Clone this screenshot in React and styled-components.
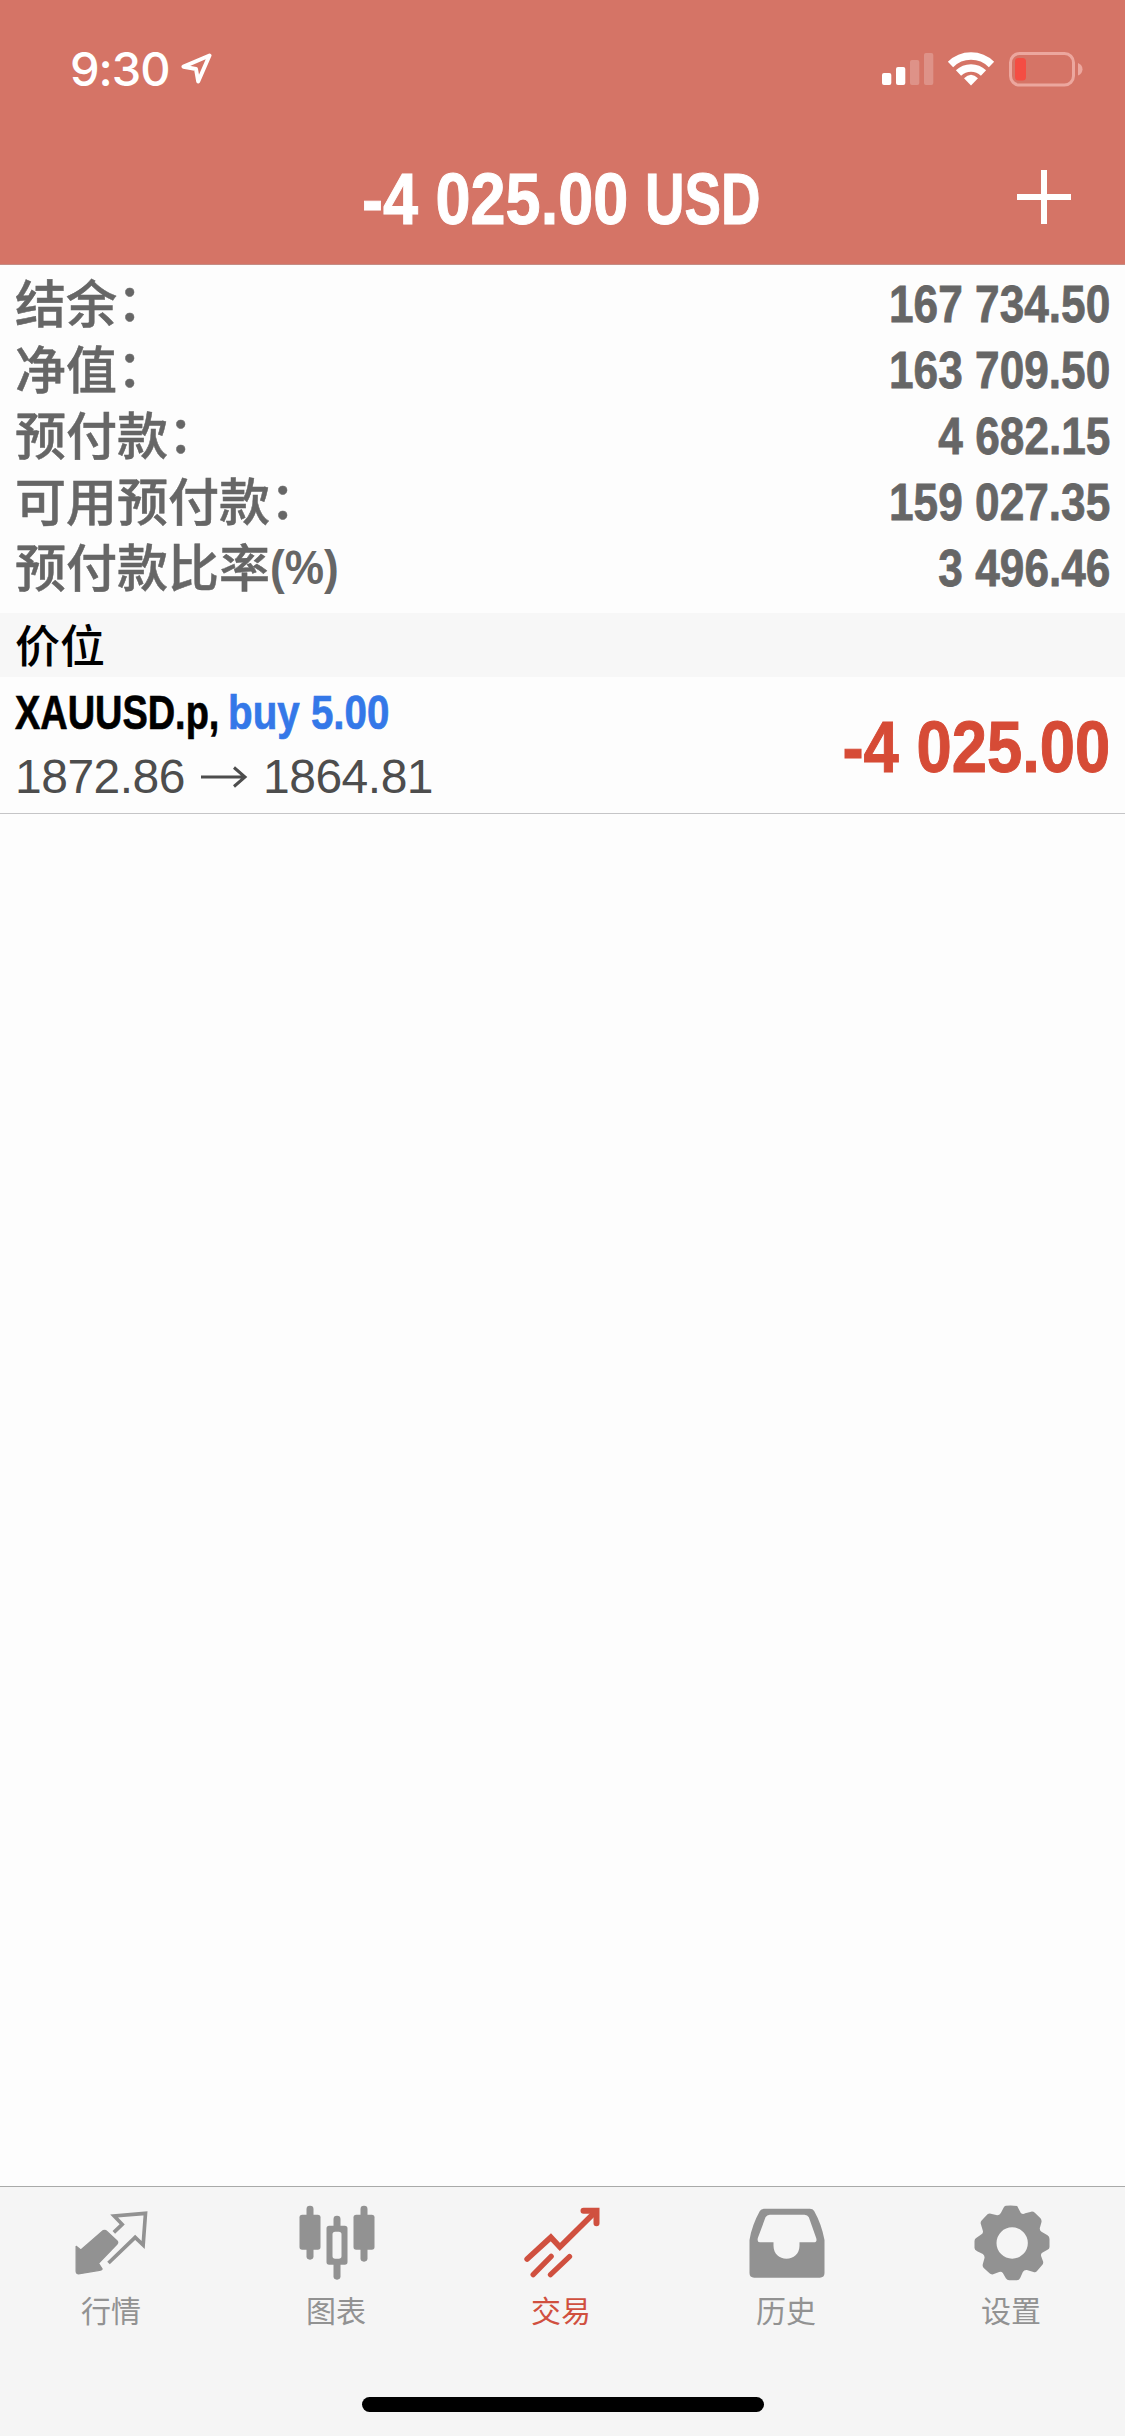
import React from 'react';
import styled, { createGlobalStyle } from 'styled-components';

const latin = '"Liberation Sans", "Noto Sans CJK SC", sans-serif';
const cjk = '"Noto Sans CJK SC", sans-serif';

const GlobalStyle = createGlobalStyle`
  * { box-sizing: border-box; }
  body { margin: 0; background: #fdfdfd; }
`;

const Screen = styled.div`
  display: flex;
  flex-direction: column;
  width: 1125px;
  height: 2436px;
  overflow: hidden;
  background: #fdfdfd;
  font-family: ${latin};
`;

const Header = styled.header`
  height: 265px;
  background: #d57466;
  color: #fff;
  border-bottom: 1px solid #c58d85;
`;

const StatusBar = styled.div`
  display: flex;
  justify-content: space-between;
  height: 132px;
  padding: 40px 40px 0 70px;
`;

const StatusLeft = styled.div`
  display: flex;
  gap: 11px;
`;

const Clock = styled.span`
  font: 500 47px/58px Inter, sans-serif;
  letter-spacing: -1px;
  width: 100px;
  white-space: nowrap;
`;

const NavBar = styled.div`
  display: grid;
  grid-template-columns: 1fr auto 1fr;
  align-items: center;
  height: 132px;
  padding: 0 54px;
`;

const AddButton = styled.button`
  grid-column: 3;
  justify-self: end;
  display: flex;
  margin: 0 0 2px;
  padding: 0;
  border: 0;
  background: none;
`;

const Title = styled.h1`
  grid-column: 2;
  display: flex;
  margin: 2px 0 0;
  font-size: 72px;
  font-weight: 700;
  line-height: 80px;
  -webkit-text-stroke: 1px currentColor;
`;

const TitlePart = styled.span`
  width: ${(p) => p.$width}px;
  white-space: nowrap;
  transform: scaleX(${(p) => p.$scale});
  transform-origin: left center;
`;

const Summary = styled.dl`
  margin: 0;
  height: 348px;
  padding: 6px 15px 0;
  color: #666;
`;

const SummaryRow = styled.div`
  display: flex;
  justify-content: space-between;
  height: 66px;
`;

const Label = styled.dt`
  display: flex;
  margin-top: -3px;
  height: 66px;
  font: 500 51px/66px ${cjk};
  -webkit-text-stroke: 0.5px currentColor;
`;

const Colon = styled.span`
  line-height: 63px;
`;

const Percent = styled.span`
  font: 700 48px/72px ${latin};
  -webkit-text-stroke: 0;
  transform: scaleX(0.92);
  transform-origin: left center;
`;

const Value = styled.dd`
  margin: 0;
  font-size: 52px;
  font-weight: 700;
  line-height: 66px;
  -webkit-text-stroke: 0.8px currentColor;
  transform: scaleX(0.85);
  transform-origin: right center;
`;

const SectionTitle = styled.h2`
  margin: 0;
  height: 64px;
  padding-left: 15px;
  background: #f7f7f7;
  color: #000;
  font: 500 45px/61px ${cjk};
`;

const Position = styled.div`
  display: flex;
  justify-content: space-between;
  align-items: center;
  height: 137px;
  padding: 0 15px;
  border-bottom: 1px solid #c5c5c7;
`;

const PositionInfo = styled.div`
  display: flex;
  flex-direction: column;
`;

const SymbolLine = styled.div`
  display: flex;
  height: 63px;
  font-size: 48px;
  font-weight: 700;
  line-height: 62px;
  -webkit-text-stroke: 0.7px currentColor;
`;

const SymbolName = styled.span`
  width: 213px;
  white-space: nowrap;
  color: #000;
  transform: scaleX(0.79);
  transform-origin: left center;
`;

const Side = styled.span`
  white-space: nowrap;
  color: #3478e8;
  transform: scaleX(0.84);
  transform-origin: left center;
`;

const PriceLine = styled.div`
  display: flex;
  align-items: center;
  gap: 14px;
  height: 64px;
  color: #4d4d4d;
  font-size: 48px;
  line-height: 62px;
  letter-spacing: -0.5px;
`;

const Profit = styled.div`
  margin-top: 3px;
  color: #d64b36;
  font-size: 72px;
  font-weight: 700;
  line-height: 80px;
  white-space: nowrap;
  -webkit-text-stroke: 1px currentColor;
  transform: scaleX(0.88);
  transform-origin: right center;
`;

const Blank = styled.main`
  flex: 1;
`;

const BottomBar = styled.footer`
  height: 250px;
  background: #f5f5f5;
  border-top: 1px solid #a9aaa9;
`;

const Tabs = styled.nav`
  display: grid;
  grid-template-columns: repeat(5, 1fr);
  height: 210px;
  padding-top: 16px;
`;

const Tab = styled.div`
  display: flex;
  flex-direction: column;
  align-items: center;
  color: ${(p) => (p.$active ? '#d0503f' : '#929292')};
`;

const TabLabel = styled.span`
  margin: 4px 3px 0 0;
  font: 400 30px/44px ${cjk};
`;

const HomeIndicator = styled.div`
  width: 402px;
  height: 15px;
  margin: 0 auto;
  border-radius: 8px;
  background: #000;
`;

const LocationIcon = () => (
  <svg width="32" height="58" viewBox="180 40 32 58" fill="none" stroke="#fff" strokeWidth="4" strokeLinejoin="round">
    <path d="M208.500 55.500 182.500 66.700 195 69 197.200 81.500Z" />
  </svg>
);

const StatusIcons = () => (
  <svg width="205" height="60" viewBox="880 40 205 60">
    <g fill="#fff">
      <rect x="882" y="73" width="9.3" height="12" rx="2" />
      <rect x="896" y="67" width="9.3" height="18" rx="2" />
      <g opacity="0.22">
        <rect x="910" y="60" width="9.3" height="25" rx="2" />
        <rect x="924" y="53" width="9.3" height="32" rx="2" />
      </g>
    </g>
    <g fill="none" stroke="#fff" strokeWidth="7.5">
      <path d="M950.500 64.500A29 29 0 0 1 991.500 64.500" />
      <path d="M958.500 73A18 18 0 0 1 983.500 73" />
    </g>
    <path fill="#fff" d="M964 78.300Q971 71 978 78.300L971 85.500Z" />
    <rect x="1010.500" y="53.500" width="63" height="31.500" rx="9" fill="none" stroke="#eca79e" strokeWidth="3" />
    <path fill="#eca79e" d="M1078 63Q1082.500 65 1082.500 69.200 1082.500 73.500 1078 75.500Z" />
    <rect x="1015" y="58" width="11" height="22.500" rx="3.500" fill="#f44d43" />
  </svg>
);

const PlusIcon = () => (
  <svg width="54" height="54" viewBox="0 0 54 54" stroke="#fff" strokeWidth="6">
    <path d="M27 0V54M0 27H54" />
  </svg>
);

const ArrowIcon = () => (
  <svg width="50" height="24" viewBox="0 0 50 24" fill="none" stroke="#4d4d4d" strokeWidth="3">
    <path d="M2 12H46M35 2.500 46 12 35 21.500" />
  </svg>
);

const QuotesIcon = () => (
  <svg width="80" height="80" viewBox="97.500 70 240 240">
    <path fill="currentColor" stroke="currentColor" strokeWidth="4" strokeLinejoin="round" d="M107 200 121 211 184 156Q192 149 200 156L229 183Q234 188 229 194L174 251 185 268Q183 272 177 272L118 282Q107 284 107 275Z" />
    <path fill="none" stroke="currentColor" strokeWidth="11" d="M220 158 245 134 221 109 315 101 308 196 284 173 204 250" />
  </svg>
);

const CandlesIcon = () => (
  <svg width="80" height="80" viewBox="772.500 70 240 240" fill="currentColor">
    <rect x="798" y="78" width="21" height="162" rx="10" />
    <rect x="777" y="105" width="63" height="105" rx="8" />
    <rect x="960" y="78" width="21" height="168" rx="10" />
    <rect x="939" y="105" width="63" height="105" rx="8" />
    <rect x="879" y="108" width="21" height="40" rx="10" />
    <rect x="879" y="242" width="21" height="58" rx="10" />
    <path fillRule="evenodd" d="M866 138H913Q921 138 921 146V247Q921 255 913 255H866Q858 255 858 247V146Q858 138 866 138ZM884 156Q876 156 876 164V229Q876 237 884 237H895Q903 237 903 229V164Q903 156 895 156Z" />
  </svg>
);

const TradeIcon = () => (
  <svg width="80" height="80" viewBox="97.500 70 240 240" fill="none" stroke="currentColor" strokeWidth="16" strokeLinecap="round">
    <path d="M110 238 181 173 208 202 314 97" strokeWidth="17" strokeLinejoin="miter" />
    <path d="M279 93H318V131" strokeWidth="18" />
    <path d="M128 285 182 230M180 285 237 231" />
  </svg>
);

const HistoryIcon = () => (
  <svg width="80" height="80" viewBox="772.500 70 240 240">
    <path fill="currentColor" fillRule="evenodd" d="M822 87H958Q967 87 971 94Q993 133 1002 181V280Q1002 294 988 294H791Q777 294 777 280V181Q784 137 808 94Q812 87 822 87ZM838 105Q829 105 825 113L802 175Q799 188 808 188H849V198C849 222 867 237 888 237S927 222 927 198V188H970Q981 188 977 175L955 113Q951 105 942 105Z" />
  </svg>
);

const GearIcon = () => (
  <svg width="80" height="80" viewBox="337.500 70 240 240">
    <path
      fill="currentColor"
      fillRule="evenodd"
      d="M436 78Q454 76 470 79L481 100Q487 105 494 101L512 96Q518 95 523 99L540 116Q544 121 543 127L538 145Q537 152 543 156L561 167Q567 171 567 178V202Q567 208 561 210L545 219Q540 223 542 230L548 246Q549 252 545 256L529 275Q525 279 519 277L499 271Q491 270 487 277L479 295Q476 302 469 302H446Q440 302 436 296L427 280Q423 275 416 277L398 284Q391 285 387 281L369 264Q365 259 367 253L372 235Q373 227 367 223L350 215Q342 211 342 205V184Q342 177 348 174L363 164Q369 160 367 153L361 133Q359 127 364 122L381 104Q385 101 391 102L410 107Q417 107 421 100L430 83Q432 79 436 78ZM455 143A47 47 0 1 0 455 237A47 47 0 1 0 455 143Z"
    />
  </svg>
);

const summary = [
  ['结余', '167 734.50'],
  ['净值', '163 709.50'],
  ['预付款', '4 682.15'],
  ['可用预付款', '159 027.35'],
  ['预付款比率', '3 496.46', '(%)'],
];

const tabs = [
  ['行情', QuotesIcon],
  ['图表', CandlesIcon],
  ['交易', TradeIcon],
  ['历史', HistoryIcon],
  ['设置', GearIcon],
];

export default function App() {
  return (
    <Screen>
      <GlobalStyle />
      <Header>
        <StatusBar>
          <StatusLeft>
            <Clock>9:30</Clock>
            <LocationIcon />
          </StatusLeft>
          <StatusIcons />
        </StatusBar>
        <NavBar>
          <Title>
            <TitlePart $width={283} $scale={0.875}>-4 025.00</TitlePart>
            <TitlePart $width={118} $scale={0.76}>USD</TitlePart>
          </Title>
          <AddButton aria-label="+"><PlusIcon /></AddButton>
        </NavBar>
      </Header>
      <Summary>
        {summary.map(([label, value, unit]) => (
          <SummaryRow key={label}>
            <Label>
              {label}
              {unit ? <Percent>{unit}</Percent> : <Colon>：</Colon>}
            </Label>
            <Value>{value}</Value>
          </SummaryRow>
        ))}
      </Summary>
      <SectionTitle>价位</SectionTitle>
      <Position>
        <PositionInfo>
          <SymbolLine>
            <SymbolName>XAUUSD.p,</SymbolName>
            <Side>buy 5.00</Side>
          </SymbolLine>
          <PriceLine>
            <span>1872.86</span>
            <ArrowIcon />
            <span>1864.81</span>
          </PriceLine>
        </PositionInfo>
        <Profit>-4 025.00</Profit>
      </Position>
      <Blank />
      <BottomBar>
        <Tabs>
          {tabs.map(([label, Icon]) => (
            <Tab key={label} $active={label === '交易'}>
              <Icon />
              <TabLabel>{label}</TabLabel>
            </Tab>
          ))}
        </Tabs>
        <HomeIndicator />
      </BottomBar>
    </Screen>
  );
}
